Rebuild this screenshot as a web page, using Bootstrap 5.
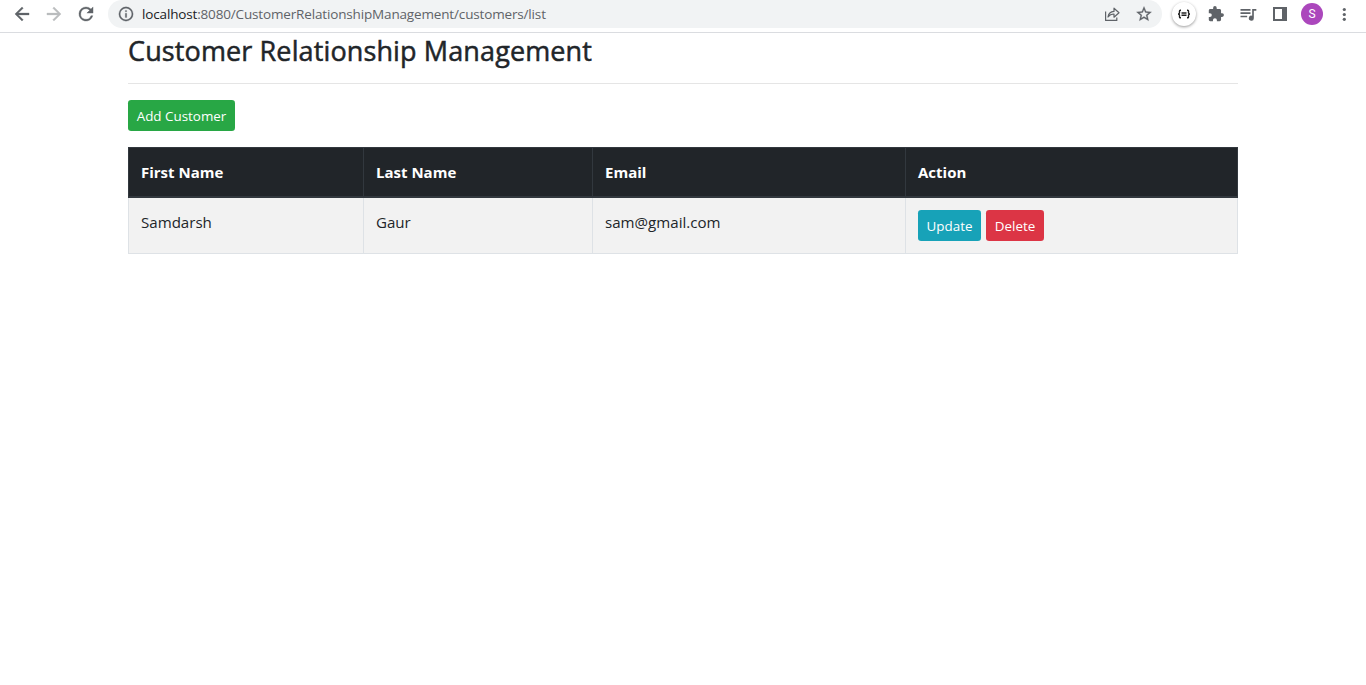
<!DOCTYPE html>
<html lang="en">
<head>
<meta charset="utf-8">
<meta name="viewport" content="width=device-width, initial-scale=1">
<title>Customer Relationship Management</title>
<link href="https://cdn.jsdelivr.net/npm/bootstrap@5.3.0/dist/css/bootstrap.min.css" rel="stylesheet">
<style>
  body { font-family: "Open Sans", "Noto Sans", sans-serif; color: #212529; background: #fff; }
  .browser-bar { height: 33px; padding: 0 6px 4px; border-bottom: 1px solid #dadce0; color: #5f6368; }
  .slot { width: 32px; height: 28px; flex: none; display: flex; align-items: center; justify-content: center; }
  .slot svg, .address svg { fill: currentColor; flex: none; }
  .slot .nav-icon { stroke: currentColor; stroke-width: .4; }
  .slot-muted { color: #babcbe; }
  .address { height: 28px; margin: 0 6px; padding: 0 2px 0 9px; border-radius: 14px; background: #f1f3f4; }
  .address .info-icon { stroke: currentColor; stroke-width: .3; }
  .url { font-size: 13.5px; margin-left: 7px; line-height: 28px; letter-spacing: -.155px; white-space: nowrap; }
  .url b { font-weight: 400; color: #202124; }
  .ext { width: 24px; height: 24px; border-radius: 50%; background: #fff; box-shadow: 0 1px 3px rgba(0,0,0,.4); }
  .ext svg { fill: none; stroke: #222; stroke-width: 1.4; }
  .avatar { width: 22px; height: 22px; border-radius: 50%; background: #ab47bc; color: #fff; font: 12px/22px Roboto, sans-serif; text-align: center; }
  .page { width: 1110px; margin: 0 auto; }
  .page h3 { font-size: 27px; line-height: 31.6px; padding-top: 2px; font-weight: 500; letter-spacing: .12px; margin: 0; white-space: nowrap; -webkit-text-stroke: .5px currentColor; }
  .page hr { margin: 16px 0; border-top: 1px solid rgba(0,0,0,.1); opacity: 1; }
  .page .btn { --bs-btn-font-size: 13.4px; --bs-btn-line-height: 21px; --bs-btn-padding-x: 0; --bs-btn-border-radius: 3.2px; height: 31px; padding: 6px 0 4px; white-space: nowrap; color: #fff; }
  .btn-add { width: 107px; background: #28a745; }
  .btn-update { width: 63px; background: #17a2b8; }
  .btn-delete { width: 58px; background: #dc3545; }
  .actions { gap: 5px; }
  .crm { width: 1110px; table-layout: fixed; border-collapse: separate; border-spacing: 0; font-size: 15.1px; border-right: 1px solid #dee2e6; }
  .col-first { width: 235px; }
  .col-last { width: 229px; }
  .col-email { width: 313px; }
  .crm th, .crm td { padding: 12px; line-height: 24px; border: 0 solid #dee2e6; border-left-width: 1px; }
  .crm thead th { background: #212529; color: #fff; border-color: #32383e; border-top-width: 1px; border-bottom-width: 2px; height: 51px; font-size: 15px; }
  .crm thead th:last-child { box-shadow: 1px 0 #32383e; }
  .crm tbody td { background: #f2f2f2; color: #212529; border-bottom-width: 1px; height: 56px; vertical-align: top; }
</style>
</head>
<body>
<header class="browser-bar d-flex align-items-start">
  <div class="slot"><svg class="nav-icon" width="22" height="22" viewBox="-.5 -.5 25 25"><path d="M20 11H7.830l5.590-5.590L12 4l-8 8 8 8 1.410-1.410L7.830 13H20v-2z"/></svg></div>
  <div class="slot slot-muted"><svg class="nav-icon" width="22" height="22" viewBox="-.5 -.5 25 25"><path d="M12 4l-1.410 1.410L16.170 11H4v2h12.170l-5.580 5.590L12 20l8-8z"/></svg></div>
  <div class="slot"><svg class="nav-icon" width="22" height="22" viewBox="-.5 -.5 25 25"><path d="M17.650 6.350A7.960 7.960 0 0 0 12 4a8 8 0 1 0 7.730 10h-2.080A6 6 0 1 1 12 6c1.660 0 3.140.69 4.220 1.780L13 11h7V4l-2.350 2.350z"/></svg></div>
  <div class="address d-flex align-items-center flex-grow-1">
    <svg class="info-icon" width="18" height="18" viewBox="-.5 -.5 25 25"><path d="M11 7h2v2h-2zm0 4h2v6h-2zm1-9a10 10 0 1 0 0 20 10 10 0 0 0 0-20zm0 18a8 8 0 1 1 0-16 8 8 0 0 1 0 16z"/></svg>
    <span class="url me-auto"><b>localhost</b>:8080/CustomerRelationshipManagement/customers/list</span>
    <div class="slot"><svg width="16" height="16" viewBox="0 0 16 16"><path fill="none" stroke="currentColor" stroke-width="1.2" stroke-linejoin="round" d="M1.600 5.500v8.900h11.200v-3M4 11c.5-3.600 2.500-5.400 6-5.600V2.200l5 4.500-5 4.500V8C7.400 8 5.500 8.900 4 11z"/></svg></div>
    <div class="slot"><svg width="18" height="18" viewBox="0 0 24 24" stroke="currentColor" stroke-width=".4"><path d="M22 9.240l-7.190-.62L12 2 9.190 8.630 2 9.240l5.460 4.730L5.820 21 12 17.270 18.180 21l-1.630-7.030L22 9.240zM12 15.400l-3.760 2.270 1-4.280-3.320-2.880 4.380-.38L12 6.100l1.710 4.040 4.380.38-3.320 2.880 1 4.280L12 15.400z"/></svg></div>
  </div>
  <div class="slot"><div class="ext d-flex align-items-center justify-content-center"><svg width="14" height="10" viewBox="0 0 14 10"><path d="M4 1.200H3.300Q2.500 1.200 2.500 2v1.800Q2.500 5 1 5q1.500 0 1.500 1.200V8q0 .8.800.8H4M10 1.200h.7q.8 0 .8.8v1.800Q11.500 5 13 5q-1.500 0-1.500 1.200V8q0 .8-.8.8H10M4.500 4h5M4.500 6.300h5"/></svg></div></div>
  <div class="slot"><svg width="18" height="18" viewBox="-.5 -.5 25 25"><path d="M20.500 11H19V7c0-1.100-.9-2-2-2h-4V3.500a2.500 2.500 0 0 0-5 0V5H4c-1.100 0-2 .9-2 2v3.800h1.500a2.700 2.700 0 0 1 0 5.400H2V20c0 1.100.9 2 2 2h3.800v-1.500a2.700 2.700 0 0 1 5.400 0V22H17c1.100 0 2-.9 2-2v-4h1.500a2.500 2.500 0 0 0 0-5z"/></svg></div>
  <div class="slot"><svg width="20" height="20" viewBox="0 0 24 24"><path d="M15 6H3v2h12V6zm0 4H3v2h12v-2zM3 16h8v-2H3v2zM17 6v8.180A3 3 0 1 0 19 17V8h3V6h-5z"/></svg></div>
  <div class="slot"><svg width="14" height="14" viewBox="0 0 14 14"><path fill-rule="evenodd" d="M0 0h14v14H0zM2 2v10h7V2z"/></svg></div>
  <div class="slot"><div class="avatar">S</div></div>
  <div class="slot"><svg width="4" height="14" viewBox="0 0 4 14"><circle cx="2.300" cy="2.500" r="1.600"/><circle cx="2.300" cy="7.500" r="1.600"/><circle cx="2.300" cy="12.300" r="1.600"/></svg></div>
</header>
<main class="page">
  <h3>Customer Relationship Management</h3>
  <hr>
  <button type="button" class="btn btn-add border-0 d-block mb-3">Add Customer</button>
  <table class="crm">
    <colgroup><col class="col-first"><col class="col-last"><col class="col-email"><col></colgroup>
    <thead><tr><th>First Name</th><th>Last Name</th><th>Email</th><th>Action</th></tr></thead>
    <tbody><tr>
      <td>Samdarsh</td><td>Gaur</td><td>sam@gmail.com</td>
      <td><div class="actions d-flex"><a class="btn btn-update border-0" href="#">Update</a><a class="btn btn-delete border-0" href="#">Delete</a></div></td>
    </tr></tbody>
  </table>
</main>
<script src="https://cdn.jsdelivr.net/npm/bootstrap@5.3.0/dist/js/bootstrap.bundle.min.js"></script>
</body>
</html>
